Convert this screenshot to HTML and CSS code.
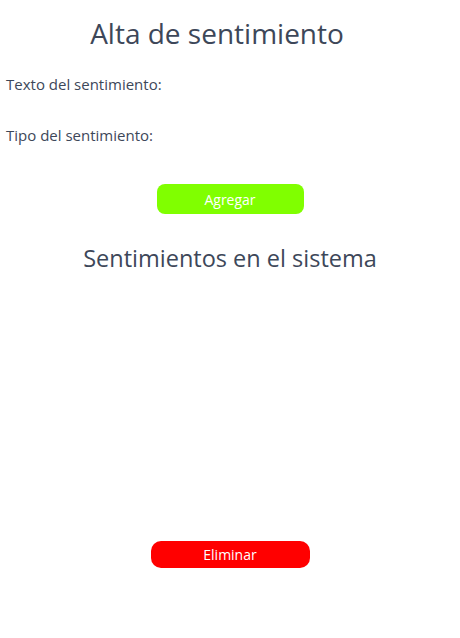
FILE: index.html
```html
<!DOCTYPE html>
<html lang="es">
<head>
<meta charset="utf-8">
<title>Alta de sentimiento</title>
<link rel="stylesheet" href="styles.css">
</head>
<body>
<main class="page">
  <h1 class="title">Alta de sentimiento</h1>
  <form class="form">
    <div class="field"><label class="label">Texto del sentimiento:</label></div>
    <div class="field"><label class="label">Tipo del sentimiento:</label></div>
    <div class="actions"><button type="button" class="btn btn-add">Agregar</button></div>
  </form>
  <h2 class="subtitle">Sentimientos en el sistema</h2>
  <div class="list"></div>
  <div class="actions"><button type="button" class="btn btn-del">Eliminar</button></div>
</main>
</body>
</html>
```
FILE: styles.css
```css
html, body {
  margin: 0;
  padding: 0;
  background: #ffffff;
}
body {
  font-family: "Open Sans", "Noto Sans", sans-serif;
  color: #3d4759;
}
.page {
  display: flex;
  flex-direction: column;
  padding: 0 6px;
}
.title {
  margin: 13px 0 0;
  padding-right: 26px;
  font-size: 28px;
  font-weight: 400;
  line-height: 40px;
  text-align: center;
}
.form {
  display: flex;
  flex-direction: column;
}
.field {
  height: 51px;
  display: flex;
  align-items: flex-start;
}
.label {
  margin-top: 21px;
  font-size: 15px;
  line-height: 20px;
}
.actions {
  display: flex;
  justify-content: center;
}
.btn {
  border: none;
  color: #ffffff;
  font-family: inherit;
  font-size: 14px;
  padding: 0;
}
.btn-add {
  width: 147px;
  height: 30px;
  margin-top: 29px;
  border-radius: 8px;
  background: #80ff00;
}
.subtitle {
  margin: 27px 0 0;
  font-size: 23.5px;
  font-weight: 400;
  line-height: 34px;
  text-align: center;
}
.list {
  height: 266px;
}
.btn-del {
  width: 159px;
  height: 27px;
  border-radius: 10px;
  background: #ff0000;
}
```
